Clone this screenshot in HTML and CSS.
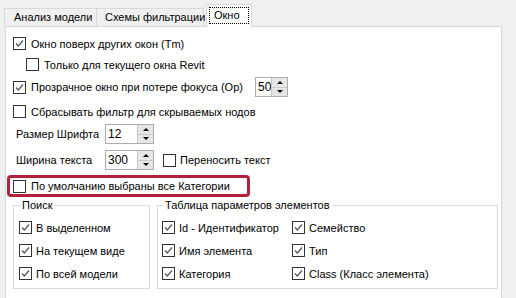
FILE: index.html
```html
<!DOCTYPE html>
<html>
<head>
<meta charset="utf-8">
<link rel="stylesheet" href="styles.css">
</head>
<body>
<div class="tabs">
  <div class="tab t1">Анализ модели</div>
  <div class="tab t2">Схемы фильтрации</div>
  <div class="tab active"><span class="focus">Окно</span></div>
</div>
<div class="panel">
  <div class="row r1">
    <label class="cb"><span class="box on"><svg viewBox="0 0 11 11"><polyline points="2,5.5 4.3,8 9,2.5"/></svg></span>Окно поверх других окон (Tm)</label>
  </div>
  <div class="row r2 indent">
    <label class="cb"><span class="box"></span>Только для текущего окна Revit</label>
  </div>
  <div class="row r3">
    <label class="cb w242"><span class="box on"><svg viewBox="0 0 11 11"><polyline points="2,5.5 4.3,8 9,2.5"/></svg></span>Прозрачное окно при потере фокуса (Op)</label>
    <div class="spin small"><span class="val">50</span><span class="btns"><span class="up"></span><span class="dn"></span></span></div>
  </div>
  <div class="row r4">
    <label class="cb"><span class="box"></span>Сбрасывать фильтр для скрываемых нодов</label>
  </div>
  <div class="row r5">
    <span class="lbl">Размер Шрифта</span>
    <div class="spin"><span class="val">12</span><span class="btns"><span class="up"></span><span class="dn"></span></span></div>
  </div>
  <div class="row r6">
    <span class="lbl">Ширина текста</span>
    <div class="spin"><span class="val">300</span><span class="btns"><span class="up"></span><span class="dn"></span></span></div>
    <label class="cb wrap"><span class="box"></span>Переносить текст</label>
  </div>
  <div class="row r7">
    <div class="hl">
      <label class="cb"><span class="box"></span>По умолчанию выбраны все Категории</label>
    </div>
  </div>
  <div class="groups">
    <fieldset class="grp g1">
      <legend>Поиск</legend>
      <div class="col">
        <label class="cb"><span class="box on"><svg viewBox="0 0 11 11"><polyline points="2,5.5 4.3,8 9,2.5"/></svg></span>В выделенном</label>
        <label class="cb"><span class="box on"><svg viewBox="0 0 11 11"><polyline points="2,5.5 4.3,8 9,2.5"/></svg></span>На текущем виде</label>
        <label class="cb"><span class="box on"><svg viewBox="0 0 11 11"><polyline points="2,5.5 4.3,8 9,2.5"/></svg></span>По всей модели</label>
      </div>
    </fieldset>
    <fieldset class="grp g2">
      <legend>Таблица параметров элементов</legend>
      <div class="cols">
        <div class="col c1">
          <label class="cb"><span class="box on"><svg viewBox="0 0 11 11"><polyline points="2,5.5 4.3,8 9,2.5"/></svg></span>Id - Идентификатор</label>
          <label class="cb"><span class="box on"><svg viewBox="0 0 11 11"><polyline points="2,5.5 4.3,8 9,2.5"/></svg></span>Имя элемента</label>
          <label class="cb"><span class="box on"><svg viewBox="0 0 11 11"><polyline points="2,5.5 4.3,8 9,2.5"/></svg></span>Категория</label>
        </div>
        <div class="col">
          <label class="cb"><span class="box on"><svg viewBox="0 0 11 11"><polyline points="2,5.5 4.3,8 9,2.5"/></svg></span>Семейство</label>
          <label class="cb"><span class="box on"><svg viewBox="0 0 11 11"><polyline points="2,5.5 4.3,8 9,2.5"/></svg></span>Тип</label>
          <label class="cb"><span class="box on"><svg viewBox="0 0 11 11"><polyline points="2,5.5 4.3,8 9,2.5"/></svg></span>Class (Класс элемента)</label>
        </div>
      </div>
    </fieldset>
  </div>
</div>
</body>
</html>
```
FILE: styles.css
```css
* { box-sizing: border-box; }
html, body { margin: 0; padding: 0; }
body {
  background: #f0f0f0;
  font-family: "Liberation Sans", Arial, sans-serif;
  font-size: 11px;
  color: #000;
  width: 516px;
  height: 298px;
  overflow: hidden;
}
.tabs {
  display: flex;
  align-items: flex-end;
  height: 26px;
  padding-left: 4px;
}
.tab {
  flex: none;
  white-space: nowrap;
  height: 18px;
  line-height: 16px;
  border: 1px solid #d9d9d9;
  border-bottom: none;
  background: #f0f0f0;
  padding: 0 4px 0 9px;
}
.t1 { width: 93px; }
.t2 { width: 107px; border-left: none; padding-left: 8px; }
.tab.active {
  height: 23px;
  margin-bottom: -1px;
  margin-left: 2px;
  width: 46px;
  background: #fff;
  padding: 2px 2px 0 2px;
  position: relative;
  z-index: 1;
}
.focus {
  display: block;
  height: 17px;
  line-height: 15px;
  border: 1px dotted #000;
  padding-left: 4px;
}
.panel {
  margin-left: 5px;
  width: 497px;
  height: 280px;
  background: #fff;
  border: 1px solid #d9d9d9;
  padding-left: 7px;
}
.row { display: flex; align-items: center; }
.r1 { margin-top: 10px; height: 13px; }
.r2 { margin-top: 8px; height: 13px; padding-left: 13px; }
.r3 { margin-top: 6px; height: 20px; }
.r4 { margin-top: 8px; height: 13px; }
.r5 { margin-top: 6px; height: 20px; }
.r6 { margin-top: 6px; height: 20px; }
.r7 { margin-top: 5px; height: 22px; }
.cb {
  display: flex;
  align-items: center;
  gap: 5px;
  white-space: nowrap;
  line-height: 14px;
  flex: none;
}
.box {
  width: 13px;
  height: 13px;
  flex: none;
  border: 1px solid #333;
  background: #fff;
  display: flex;
}
.box svg { width: 11px; height: 11px; }
.box polyline { fill: none; stroke: #555; stroke-width: 1.2; }
.w242 { width: 242px; }
.lbl { width: 92px; flex: none; padding-left: 3px; white-space: nowrap; }
.spin {
  flex: none;
  width: 49px;
  height: 20px;
  border: 1px solid #acacac;
  background: #fff;
  display: flex;
}
.spin.small { width: 33px; }
.val { flex: 1; padding-left: 2px; line-height: 18px; font-size: 12px; }
.btns {
  width: 16px;
  flex: none;
  display: flex;
  flex-direction: column;
  border-left: 1px solid #c8c8c8;
  background: #e6e6e6;
}
.btns span {
  flex: 1;
  display: flex;
  align-items: center;
  justify-content: center;
}
.btns .up { border-bottom: 1px solid #c8c8c8; }
.btns .up::after {
  content: "";
  border-left: 3px solid transparent;
  border-right: 3px solid transparent;
  border-bottom: 3px solid #000;
}
.btns .dn::after {
  content: "";
  border-left: 3px solid transparent;
  border-right: 3px solid transparent;
  border-top: 3px solid #000;
}
.wrap { margin-left: 9px; gap: 4px; }
.hl {
  width: 243px;
  height: 22px;
  margin-left: -6px;
  border: 3px solid #b3203c;
  border-radius: 4px;
  display: flex;
  align-items: center;
  padding-left: 3px;
}
.groups {
  display: flex;
  gap: 7px;
  margin-top: 1px;
}
.grp {
  margin: 0;
  border: 1px solid #dcdcdc;
  padding: 0 0 0 5px;
  height: 91px;
  flex: none;
}
.grp legend {
  padding: 0 2px;
  margin-left: 1px;
  line-height: 14px;
}
.g1 { width: 137px; }
.g2 { width: 341px; padding-left: 4px; }
.col {
  display: flex;
  flex-direction: column;
  gap: 10px;
  margin-top: 9px;
}
.col .cb { height: 13px; gap: 4px; }
.cols { display: flex; }
.cols .c1 { width: 130px; }
```
